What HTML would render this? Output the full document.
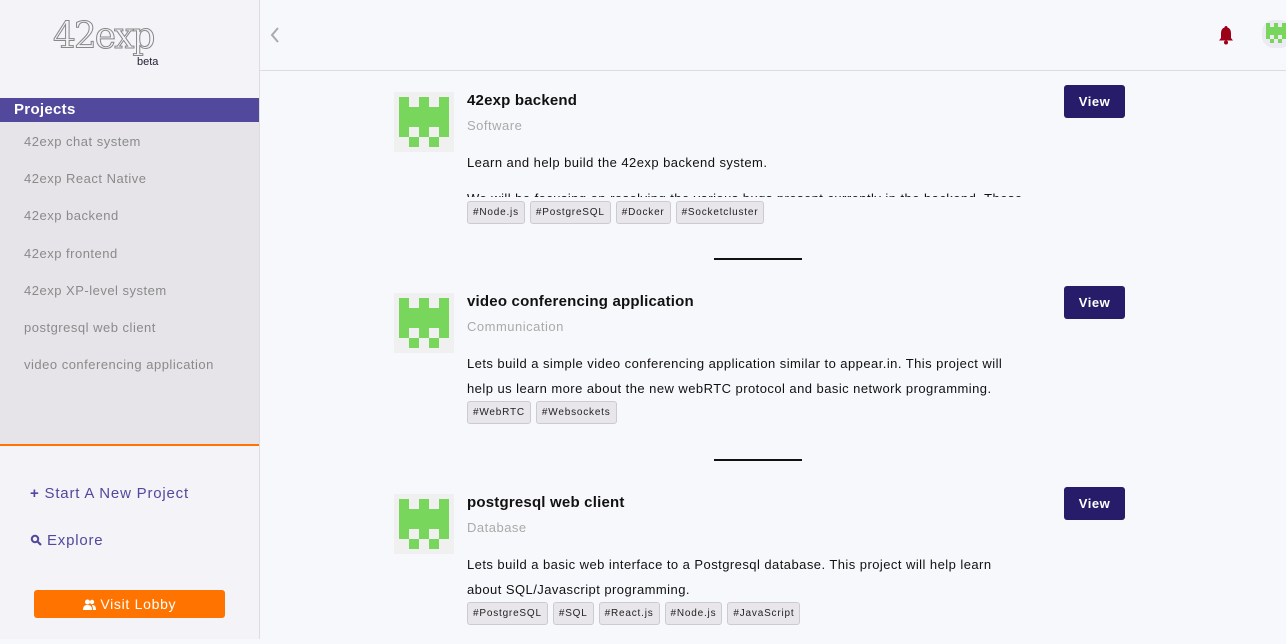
<!DOCTYPE html>
<html><head><style>
*{margin:0;padding:0;box-sizing:border-box}
body{width:1286px;height:639px;overflow:hidden;background:#f7f8fb;font-family:"Liberation Sans","DejaVu Sans",sans-serif;position:relative}
.side{position:absolute;left:0;top:0;width:260px;height:639px;background:#f4f3f8;border-right:1px solid #ddd}
.logo{position:absolute;left:53px;top:16px;font-family:"DejaVu Serif","Liberation Serif",serif;font-size:36px;color:#f4f3f8;-webkit-text-stroke:1px #888;letter-spacing:-2px}
.beta{position:absolute;left:137px;top:56px;font-size:11px;color:#223}
.projh{position:absolute;left:0;top:98px;width:259px;height:24px;background:#52489c;color:#fff;font-size:15px;font-weight:bold;padding:3px 14px;letter-spacing:.3px}
.list{position:absolute;left:0;top:122px;width:259px;height:324px;background:#e6e4e9;border-bottom:2px solid #ff7400}
.list div{position:absolute;left:24px;font-size:13px;color:#8a8a8a;letter-spacing:.5px}
.act{position:absolute;left:30px;font-size:15px;color:#52489c;letter-spacing:.8px}
.lobby{position:absolute;left:34px;top:590px;width:191px;height:28px;background:#ff7400;border-radius:3px;color:#fff;font-size:14px;text-align:center;line-height:28px;letter-spacing:.7px}
.top{position:absolute;left:260px;top:0;width:1026px;height:71px;border-bottom:1px solid #ddd;background:#f7f8fb}
.card{position:absolute;left:394px;width:740px;height:150px}
.av{position:absolute;left:0;top:0;width:60px;height:60px;background:#f0f0f0}
.t{position:absolute;left:73px;top:0;font-size:15px;font-weight:bold;color:#111;letter-spacing:.2px}
.cat{position:absolute;left:73px;top:26px;font-size:13px;color:#aaa;letter-spacing:.5px}
.d{position:absolute;left:73px;top:58px;width:555px;font-size:13px;line-height:25px;color:#111;letter-spacing:.45px;overflow:hidden}
.tags{position:absolute;left:73px;display:flex;gap:5px}
.tags span{border:1px solid #ccc;background:#e8e6ea;border-radius:3px;font-size:10px;padding:5px 5px;color:#222;letter-spacing:.8px}
.view{position:absolute;left:670px;top:-7px;width:61px;height:33px;background:#261c6a;color:#fff;border-radius:3px;font-size:13px;font-weight:bold;text-align:center;line-height:33px;letter-spacing:.5px}
.sep{position:absolute;left:714px;width:88px;height:2px;background:#111}
</style></head><body>
<div class="side">
<div class="logo">42exp</div><div class="beta">beta</div>
<div class="projh">Projects</div>
<div class="list">
<div style="top:12px">42exp chat system</div>
<div style="top:49px">42exp React Native</div>
<div style="top:86px">42exp backend</div>
<div style="top:124px">42exp frontend</div>
<div style="top:161px">42exp XP-level system</div>
<div style="top:198px">postgresql web client</div>
<div style="top:235px">video conferencing application</div>
</div>
<div class="act" style="top:485px"><b>+</b> Start A New Project</div>
<div class="act" style="top:532px"><svg width="12" height="12" viewBox="0 0 12 12" style="vertical-align:-1px"><circle cx="5" cy="5" r="3.2" stroke="#52489c" stroke-width="2" fill="none"/><path d="M7.5 7.5L11 11" stroke="#52489c" stroke-width="2.2"/></svg> Explore</div>
<div class="lobby"><svg width="13" height="11" viewBox="0 0 13 11" style="vertical-align:-1px"><circle cx="4.5" cy="3" r="2.5" fill="#fff"/><path d="M0 11c0-4 2-5 4.5-5S9 7 9 11z" fill="#fff"/><circle cx="9" cy="3" r="2.2" fill="#fff"/><path d="M9 6c2.5 0 4 1 4 5h-3c0-2-.5-3.5-1-5z" fill="#fff"/></svg> Visit Lobby</div>
</div>
<div class="top">
<svg style="position:absolute;left:9px;top:26px" width="12" height="18"><path d="M9 2L3 9L9 16" stroke="#aaa" stroke-width="2" fill="none"/></svg>
<svg style="position:absolute;left:955px;top:24px" width="22" height="22" viewBox="0 0 22 22"><path d="M11 2c-1 0-1.5.7-1.5 1.5C6.5 4.5 6 7 6 10v4l-2 2.5h14L16 14v-4c0-3-.5-5.5-3.5-6.5C12.5 2.7 12 2 11 2z" fill="#9b0018"/><circle cx="11" cy="18.5" r="2" fill="#9b0018"/></svg>
<svg style="position:absolute;left:1002px;top:20px" width="26" height="28" viewBox="0 0 26 28"><rect width="30" height="28" rx="12" fill="#eceaf2"/><g fill="#78d65c"><rect x="4" y="3" width="4" height="4"/><rect x="12" y="3" width="4" height="4"/><rect x="20" y="3" width="4" height="4"/><rect x="4" y="7" width="22" height="8"/><rect x="4" y="15" width="4" height="4"/><rect x="12" y="15" width="4" height="4"/><rect x="20" y="15" width="4" height="4"/><rect x="8" y="19" width="4" height="4"/><rect x="16" y="19" width="4" height="4"/></g></svg>
</div>

<svg width="0" height="0" style="position:absolute"><defs><g id="inv" fill="#78d65c"><rect x="5" y="5" width="10" height="10"/><rect x="25" y="5" width="10" height="10"/><rect x="45" y="5" width="10" height="10"/><rect x="5" y="15" width="50" height="20"/><rect x="5" y="35" width="10" height="10"/><rect x="25" y="35" width="10" height="10"/><rect x="45" y="35" width="10" height="10"/><rect x="15" y="45" width="10" height="10"/><rect x="35" y="45" width="10" height="10"/></g></defs></svg>

<div class="card" style="top:92px">
<svg class="av" viewBox="0 0 60 60"><use href="#inv"/></svg>
<div class="t">42exp backend</div><div class="cat">Software</div>
<div class="d">Learn and help build the 42exp backend system.</div>
<div class="d" style="top:100px;height:5px;line-height:13px;width:600px"><span>We will be focusing on resolving the various bugs present currently in the backend. These</span></div>
<div class="tags" style="top:109px"><span>#Node.js</span><span>#PostgreSQL</span><span>#Docker</span><span>#Socketcluster</span></div>
<div class="view" style="top:-7px">View</div>
</div>
<div class="sep" style="top:258px"></div>

<div class="card" style="top:293px">
<svg class="av" viewBox="0 0 60 60"><use href="#inv"/></svg>
<div class="t">video conferencing application</div><div class="cat">Communication</div>
<div class="d">Lets build a simple video conferencing application similar to appear.in. This project will help us learn more about the new webRTC protocol and basic network programming.</div>
<div class="tags" style="top:108px"><span>#WebRTC</span><span>#Websockets</span></div>
<div class="view">View</div>
</div>
<div class="sep" style="top:459px"></div>

<div class="card" style="top:494px">
<svg class="av" viewBox="0 0 60 60"><use href="#inv"/></svg>
<div class="t">postgresql web client</div><div class="cat">Database</div>
<div class="d">Lets build a basic web interface to a Postgresql database. This project will help learn about SQL/Javascript programming.</div>
<div class="tags" style="top:108px"><span>#PostgreSQL</span><span>#SQL</span><span>#React.js</span><span>#Node.js</span><span>#JavaScript</span></div>
<div class="view">View</div>
</div>
</body></html>
